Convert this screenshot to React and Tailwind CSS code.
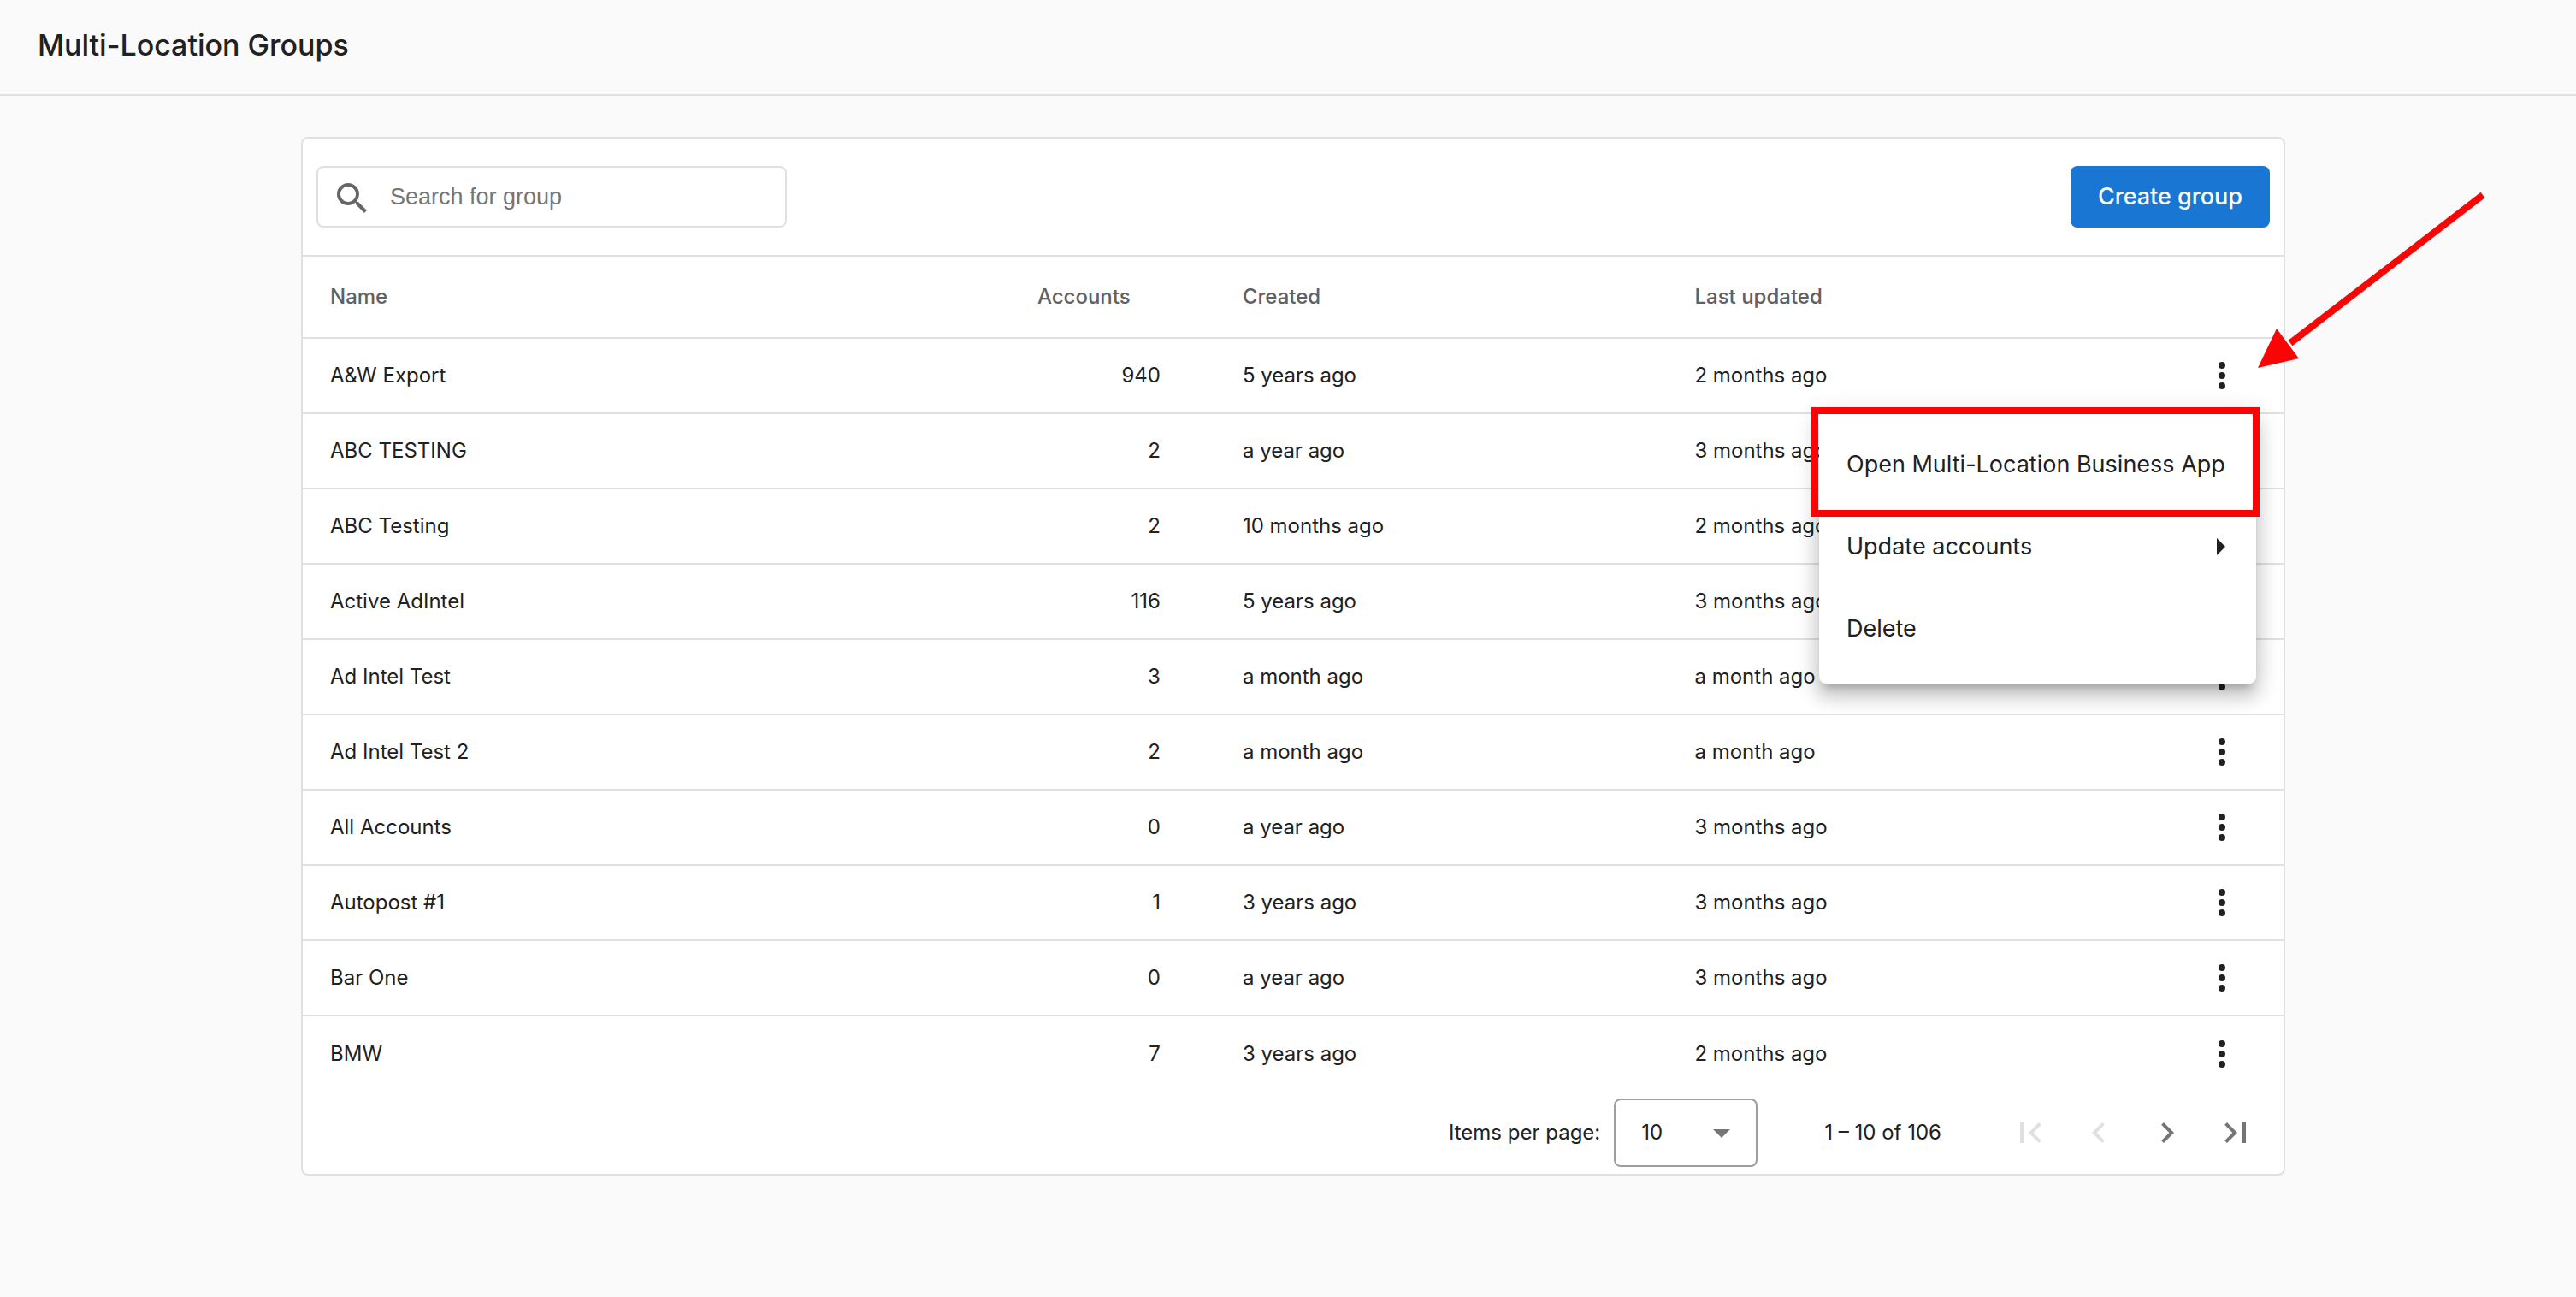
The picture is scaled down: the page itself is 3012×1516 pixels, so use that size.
const SearchIcon = () => (
  <svg viewBox="0 0 24 24" className="mt-1 size-12 shrink-0 fill-[#666666]" aria-hidden="true">
    <path d="M15.5 14h-.79l-.28-.27A6.47 6.47 0 0 0 16 9.5 6.5 6.5 0 1 0 9.5 16c1.61 0 3.09-.59 4.23-1.57l.27.28v.79l5 4.99L20.49 19l-4.99-5zm-6 0C7.01 14 5 11.99 5 9.5S7.01 5 9.5 5 14 7.01 14 9.5 11.99 14 9.5 14z" />
  </svg>
);

const rows = [
  ["A&W Export", "940", "5 years ago", "2 months ago"],
  ["ABC TESTING", "2", "a year ago", "3 months ago"],
  ["ABC Testing", "2", "10 months ago", "2 months ago"],
  ["Active AdIntel", "116", "5 years ago", "3 months ago"],
  ["Ad Intel Test", "3", "a month ago", "a month ago"],
  ["Ad Intel Test 2", "2", "a month ago", "a month ago"],
  ["All Accounts", "0", "a year ago", "3 months ago"],
  ["Autopost #1", "1", "3 years ago", "3 months ago"],
  ["Bar One", "0", "a year ago", "3 months ago"],
  ["BMW", "7", "3 years ago", "2 months ago"],
];

const pagerButtons = [
  { label: "First page", off: true, d: "M18.41 16.59L13.82 12l4.59-4.59L17 6l-6 6 6 6zM6 6h2v12H6z" },
  { label: "Previous page", off: true, d: "M15.41 7.41L14 6l-6 6 6 6 1.41-1.41L10.83 12z" },
  { label: "Next page", off: false, d: "M10 6L8.59 7.41 13.17 12l-4.58 4.59L10 18l6-6z" },
  { label: "Last page", off: false, d: "M5.59 7.41L10.18 12l-4.59 4.59L7 18l6-6-6-6zM16 6h2v12h-2z" },
];

function RowMenu() {
  return (
    <div role="menu" className="absolute top-[83px] right-8 z-10 w-[511px] rounded-lg bg-white py-4 text-left text-[27px] leading-10 shadow-[0_10px_10px_-6px_rgba(0,0,0,0.2),0_16px_20px_2px_rgba(0,0,0,0.14),0_6px_28px_4px_rgba(0,0,0,0.12)]">
      <button role="menuitem" className="flex h-24 w-full items-center px-8 whitespace-nowrap">
        Open Multi-Location Business App
      </button>
      <button role="menuitem" className="flex h-24 w-full items-center justify-between pr-9 pl-8">
        Update accounts
        <svg viewBox="0 0 10 20" className="h-5 w-[10px] fill-[#212121]" aria-hidden="true">
          <path d="M0 0l10 10L0 20z" />
        </svg>
      </button>
      <button role="menuitem" className="flex h-24 w-full items-center px-8">Delete</button>
      <div className="pointer-events-none absolute -top-[3px] -right-1 -left-[9px] h-32 border-8 border-[#fa0505]" />
      <svg viewBox="0 0 270 210" className="pointer-events-none absolute -top-[255px] -right-[270px] h-[210px] w-[270px]" aria-hidden="true">
        <path d="M265 4L40 177" stroke="#fa0505" strokeWidth="8" fill="none" />
        <path d="M2 206L24 160L50 195z" fill="#fa0505" />
      </svg>
    </div>
  );
}

export default function App() {
  return (
    <div className="min-h-screen bg-[#fafafa] font-['Inter',sans-serif] text-[#212121]">
      <header className="flex h-28 items-center border-b-2 border-[#e0e0e0] pb-1 pl-11">
        <h1 className="text-[34px] leading-10 font-medium">Multi-Location Groups</h1>
      </header>
      <main className="pt-12 pl-3">
        <section className="mx-auto max-w-[2320px] rounded-lg border-2 border-[#e0e0e0] bg-white">
          <div className="flex items-center justify-between border-b-2 border-[#e0e0e0] px-4 py-8">
            <label className="flex h-[72px] w-[550px] items-center gap-5 rounded-lg border-2 border-[#e0e0e0] px-4">
              <SearchIcon />
              <input
                type="text"
                aria-label="Search for group"
                placeholder="Search for group"
                className="min-w-0 flex-1 bg-transparent font-['Liberation_Sans',sans-serif] text-[27px] outline-none placeholder:text-[#757575]"
              />
            </label>
            <button className="h-[72px] rounded-lg bg-[#1976d2] px-8 text-[27px] font-medium text-white">Create group</button>
          </div>
          <table className="w-full table-fixed border-separate border-spacing-0 text-left text-[24px] leading-8">
            <colgroup>
              <col className="w-[37%]" />
              <col className="w-[242px]" />
              <col />
              <col />
              <col className="w-[160px]" />
            </colgroup>
            <thead>
              <tr className="h-24 text-[#616161] *:border-b-2 *:border-[#e0e0e0]">
                <th className="pl-8 font-medium">Name</th>
                <th className="pl-0.5 font-medium">Accounts</th>
                <th className="font-medium">Created</th>
                <th className="font-medium">Last updated</th>
                <th aria-label="Actions" />
              </tr>
            </thead>
            <tbody>
              {rows.map(([name, accounts, created, updated], i) => (
                <tr key={name} className="h-[88px] *:border-b-2 *:border-[#e0e0e0] last:*:border-b-0">
                  <td className="pl-8">{name}</td>
                  <td className="pr-24 text-right">{accounts}</td>
                  <td>{created}</td>
                  <td>{updated}</td>
                  <td className="relative pr-12 text-right">
                    <button aria-label={`Actions for ${name}`} className="ml-auto block">
                      <svg viewBox="0 0 24 24" className="size-12 fill-[#212121]" aria-hidden="true">
                        <circle cx="12" cy="6" r="2" />
                        <circle cx="12" cy="12" r="2" />
                        <circle cx="12" cy="18" r="2" />
                      </svg>
                    </button>
                    {i === 0 && <RowMenu />}
                  </td>
                </tr>
              ))}
            </tbody>
          </table>
          <div className="flex h-24 items-center justify-end pr-4 text-[24px]">
            <label htmlFor="page-size" className="mr-4">Items per page:</label>
            <div className="relative mr-[78px]">
              <select id="page-size" className="h-20 w-[168px] appearance-none rounded-lg border-2 border-[#9e9e9e] bg-white pl-[30px]" defaultValue="10">
                <option>10</option>
                <option>25</option>
                <option>50</option>
              </select>
              <svg viewBox="0 0 20 10" className="pointer-events-none absolute top-9 right-8 h-[10px] w-5 fill-[#757575]" aria-hidden="true">
                <path d="M0 0h20L10 10z" />
              </svg>
            </div>
            <span className="mr-16">1 – 10 of 106</span>
            {pagerButtons.map(({ label, off, d }) => (
              <button key={label} aria-label={label} disabled={off} className="flex size-20 items-center justify-center text-[#757575] disabled:text-[#e0e0e0]">
                <svg viewBox="0 0 24 24" className="size-12 fill-current" aria-hidden="true">
                  <path d={d} />
                </svg>
              </button>
            ))}
          </div>
        </section>
      </main>
    </div>
  );
}
